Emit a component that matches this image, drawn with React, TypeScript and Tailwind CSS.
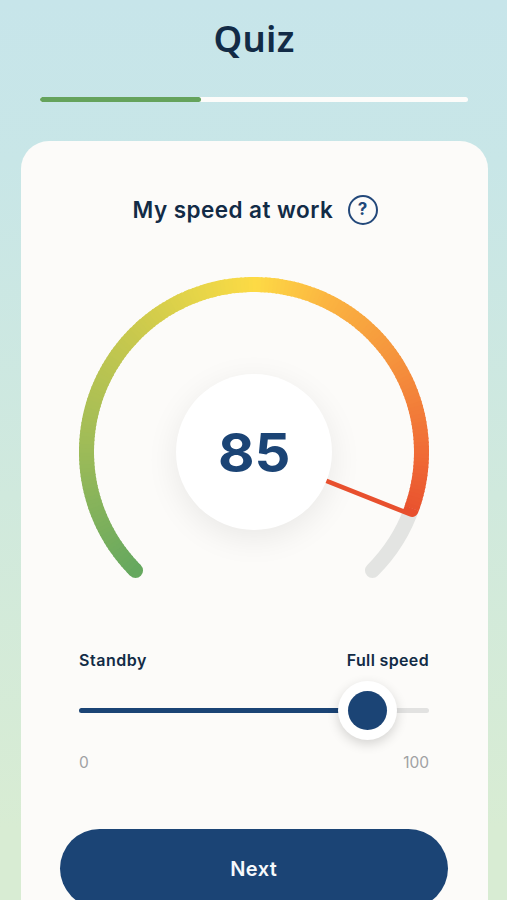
const CX = 175;
const CY = 175;
const RADIUS = 167.5;
const START = 135;
const END = 381.7;
const STEPS = 180;

const STOPS: [number, [number, number, number]][] = [
  [135, [102, 168, 95]],
  [180, [157, 187, 88]],
  [225, [202, 201, 77]],
  [250, [230, 213, 72]],
  [270, [253, 218, 69]],
  [295, [251, 180, 65]],
  [325, [245, 148, 61]],
  [360, [240, 107, 54]],
  [382, [232, 80, 46]],
];

function colorAt(angle: number) {
  let i = 0;
  while (i < STOPS.length - 2 && angle > STOPS[i + 1][0]) i++;
  const [a, from] = STOPS[i];
  const [b, to] = STOPS[i + 1];
  const t = Math.min(1, Math.max(0, (angle - a) / (b - a)));
  return `rgb(${from.map((v, k) => Math.round(v + (to[k] - v) * t)).join(",")})`;
}

function arc(from: number, to: number) {
  const pt = (d: number) => {
    const r = (d * Math.PI) / 180;
    return `${(CX + RADIUS * Math.cos(r)).toFixed(3)} ${(CY + RADIUS * Math.sin(r)).toFixed(3)}`;
  };
  return `M${pt(from)}A${RADIUS} ${RADIUS} 0 ${to - from > 180 ? 1 : 0} 1 ${pt(to)}`;
}

function Gauge({ value }: { value: number }) {
  const arcEnd = END - 2;
  const step = (arcEnd - START) / STEPS;
  return (
    <div className="relative mx-auto h-[303px] w-[350px]">
      <svg width="350" height="303" viewBox="0 0 350 303" fill="none" className="block overflow-visible">
        <path d={arc(15, 45)} stroke="#e3e4e2" strokeWidth="15" strokeLinecap="round" />
        <path d={arc(START, START + 0.5)} stroke="#66a85f" strokeWidth="15" strokeLinecap="round" />
        {Array.from({ length: STEPS }, (_, i) => {
          const a = START + i * step;
          return (
            <path
              key={i}
              d={arc(a, Math.min(arcEnd, a + step + 0.5))}
              stroke={colorAt(a)}
              strokeWidth="15"
            />
          );
        })}
      </svg>
      <div className="absolute top-[97px] left-[97px] flex h-[156px] w-[156px] items-center justify-center rounded-full bg-white shadow-[0_8px_32px_rgba(0,0,0,0.08)]">
        <span className="mt-[2px] scale-x-[1.06] text-[53px] leading-none font-bold text-[#1b4475]">{value}</span>
      </div>
      <svg width="350" height="303" viewBox="0 0 350 303" className="absolute inset-0 overflow-visible">
        <g transform="translate(175 175) rotate(21.7)" fill="#e8502e">
          <path d="M78 -2.2H160V-6.2H174.8L174.9 -4Q174 2.4 168 2.4H78Z" />
        </g>
      </svg>
    </div>
  );
}

function Slider() {
  return (
    <div className="relative flex h-[60px] items-center">
      <div className="h-[5px] w-full overflow-hidden rounded-full bg-[#e2e2e1]">
        <div className="h-full w-[83%] bg-[#1b4475]" />
      </div>
      <div className="absolute top-[0.5px] left-[259px] flex h-[59px] w-[59px] items-center justify-center rounded-full bg-white shadow-[0_4px_12px_rgba(0,0,0,0.16)]">
        <div className="h-[39px] w-[39px] rounded-full bg-[#1b4475]" />
      </div>
    </div>
  );
}

export default function App() {
  return (
    <div className="flex h-[900px] w-[507px] flex-col overflow-hidden bg-[linear-gradient(180deg,#c7e5ea_0%,#c8e6e7_18%,#d0e9dd_55%,#d8ecd3_92%,#d8ecd3_100%)] font-['Inter','Liberation_Sans',sans-serif] text-[#122b46]">
      <h1 className="mt-[16px] pl-[1px] text-center font-['Noto_Sans',sans-serif] text-[36.5px] leading-[44px] font-semibold tracking-[0.3px]">Quiz</h1>
      <div className="mr-[39px] ml-[40px] mt-[36.5px] h-[5px] shrink-0 overflow-hidden rounded-full bg-[#fcfcfa]">
        <div className="h-full w-[161px] rounded-full bg-[#65a35c]" />
      </div>
      <main className="mr-[19.5px] ml-[20.5px] mt-[39px] flex h-[800px] shrink-0 flex-col rounded-t-[28px] bg-[#fcfbf9] px-[39px]">
        <div className="mt-[54px] flex h-[30px] items-center pl-[73px]">
          <h2 className="w-[215px] pt-[1px] text-[22.5px] leading-[30px] font-semibold tracking-[0.45px] whitespace-nowrap">My speed at work</h2>
          <button className="flex h-[30px] w-[30px] items-center justify-center rounded-full border-2 border-[#23487a] text-[17px] leading-none font-bold text-[#23487a]">?</button>
        </div>
        <div className="mt-[52.5px]">
          <Gauge value={85} />
        </div>
        <div className="mx-[19.5px] mt-[70px]">
          <div className="flex justify-between text-[16px] leading-[20px] font-semibold tracking-[0.55px]">
            <span>Standby</span>
            <span className="tracking-[0.35px]">Full speed</span>
          </div>
          <div className="mt-[10px]">
            <Slider />
          </div>
          <div className="mt-[12.5px] flex justify-between text-[15.5px] leading-[20px] text-[#a0a1a3]">
            <span>0</span>
            <span>100</span>
          </div>
        </div>
        <button className="mt-[56px] mr-[0.5px] h-[79px] shrink-0 rounded-full bg-[#1b4475] pt-[2px] text-[20px] font-semibold tracking-[0.4px] text-[#f7f9fb]">Next</button>
      </main>
    </div>
  );
}
